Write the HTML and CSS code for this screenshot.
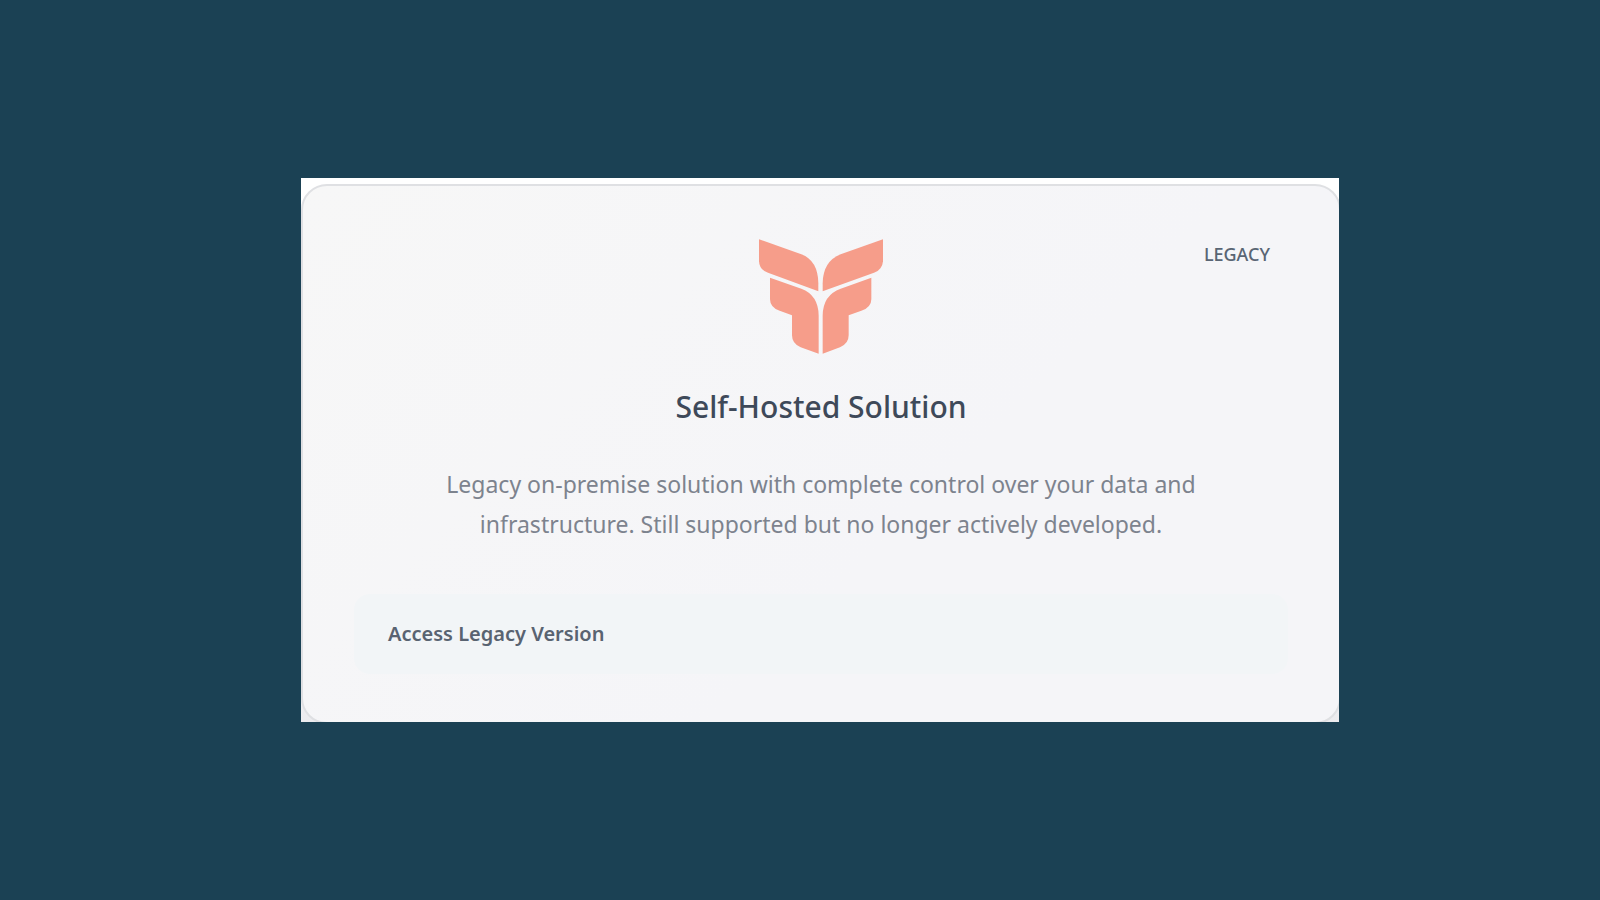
FILE: index.html
```
<!DOCTYPE html>
<html lang="en">
<head>
  <meta charset="UTF-8">
  <meta name="viewport" content="width=device-width, initial-scale=1.0">
  <title>Self-Hosted Solution</title>
  <link rel="stylesheet" href="styles.css">
</head>
<body>
  <main class="frame">
    <article class="card">
      <span class="badge">LEGACY</span>
      <svg class="logo" viewBox="57 58 372 344" aria-hidden="true">
        <path d="M57 58 L184 103 Q234 122 235 190 L235 214 L84 159 Q58 149 57 124 Z"/>
        <path d="M429 58 L302 103 Q249 124 248 190 L248 214 L402 159 Q427 149 429 124 Z"/>
        <path d="M90 174 L184 207 Q235 226 236 287 L236 402 L182 382 Q156 371 156 346 L156 286 L119 273 Q90 262 90 238 Z"/>
        <path d="M394 174 L302 207 Q249 226 248 287 L248 402 L300 382 Q326 371 326 346 L326 286 L364 273 Q394 262 394 238 Z"/>
      </svg>
      <h1 class="title">Self-Hosted Solution</h1>
      <p class="description">Legacy on-premise solution with complete control over your data and infrastructure. Still supported but no longer actively developed.</p>
      <a class="access-link" href="#">Access Legacy Version</a>
    </article>
  </main>
</body>
</html>
```
FILE: styles.css
```
* {
  box-sizing: border-box;
}
body {
  margin: 0;
  min-height: 100vh;
  padding: 24px 24px 24px 64px;
  display: flex;
  align-items: center;
  justify-content: center;
  background-color: #1b4154;
  font-family: "Noto Sans", "Open Sans", sans-serif;
}
.frame {
  width: 100%;
  max-width: 1038px;
  padding-top: 6px;
  background: linear-gradient(#fff 50%, #ececef);
  overflow: hidden;
}
.card {
  position: relative;
  display: flex;
  flex-direction: column;
  align-items: center;
  margin: 0 -2px -2px 0;
  padding: 53px 51px 48px;
  border: 2px solid #dfe0e3;
  border-radius: 26px;
  background: linear-gradient(135deg, #f7f7f7, #f5f5f8 60%);
}
.badge {
  position: absolute;
  top: 55px;
  right: 69px;
  font-size: 18px;
  font-weight: 500;
  line-height: 26px;
  color: #596574;
}
.logo {
  width: 124px;
  height: 115px;
  fill: #f69d8a;
}
.title {
  margin: 35px 0 39px;
  font-size: 30px;
  font-weight: 500;
  line-height: 36px;
  color: #3e4959;
}
.description {
  max-width: 800px;
  margin: 0 0 50px;
  font-size: 23px;
  line-height: 40px;
  text-align: center;
  color: #7d838e;
}
.access-link {
  width: 100%;
  padding: 25px 34px;
  border-radius: 16px;
  background-color: #f2f5f7;
  font-size: 20px;
  font-weight: 600;
  line-height: 30px;
  color: #596371;
  text-decoration: none;
}
```
